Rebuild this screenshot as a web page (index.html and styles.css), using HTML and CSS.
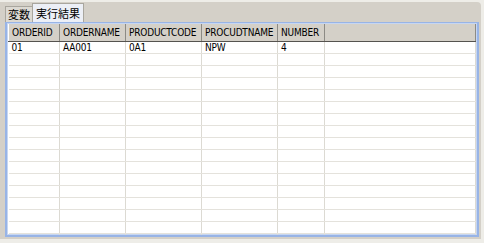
FILE: index.html
```html
<!DOCTYPE html>
<html lang="ja">
<head>
    <meta charset="UTF-8">
    <title>実行結果</title>
    <link rel="stylesheet" href="styles.css">
</head>
<body>
    <!--tab control with the result grid-->
    <div class="tab-control">
        <div class="tab-strip">
            <div class="tab">変数</div>
            <div class="tab tab-active">実行結果</div>
        </div>

        <div class="tab-page">
            <table class="grid">
                <colgroup>
                    <col class="c1"><col class="c2"><col class="c3"><col class="c4"><col class="c5"><col>
                </colgroup>
                <thead>
                    <tr>
                        <th>ORDERID</th>
                        <th>ORDERNAME</th>
                        <th>PRODUCTCODE</th>
                        <th>PROCUDTNAME</th>
                        <th>NUMBER</th>
                        <th></th>
                    </tr>
                </thead>
                <tbody>
                    <tr><td>01</td><td>AA001</td><td>0A1</td><td>NPW</td><td>4</td><td></td></tr>
                    <tr><td></td><td></td><td></td><td></td><td></td><td></td></tr>
                    <tr><td></td><td></td><td></td><td></td><td></td><td></td></tr>
                    <tr><td></td><td></td><td></td><td></td><td></td><td></td></tr>
                    <tr><td></td><td></td><td></td><td></td><td></td><td></td></tr>
                    <tr><td></td><td></td><td></td><td></td><td></td><td></td></tr>
                    <tr><td></td><td></td><td></td><td></td><td></td><td></td></tr>
                    <tr><td></td><td></td><td></td><td></td><td></td><td></td></tr>
                    <tr><td></td><td></td><td></td><td></td><td></td><td></td></tr>
                    <tr><td></td><td></td><td></td><td></td><td></td><td></td></tr>
                    <tr><td></td><td></td><td></td><td></td><td></td><td></td></tr>
                    <tr><td></td><td></td><td></td><td></td><td></td><td></td></tr>
                    <tr><td></td><td></td><td></td><td></td><td></td><td></td></tr>
                    <tr><td></td><td></td><td></td><td></td><td></td><td></td></tr>
                    <tr><td></td><td></td><td></td><td></td><td></td><td></td></tr>
                    <tr><td></td><td></td><td></td><td></td><td></td><td></td></tr>
                    <tr><td></td><td></td><td></td><td></td><td></td><td></td></tr>
                </tbody>
            </table>
        </div>
    </div>
</body>
</html>
```

FILE: styles.css
```css
/*page and tab control*/
body {
    margin: 0;
    background-color: #eeede8;
    font-family: "DejaVu Sans Condensed", "Liberation Sans", sans-serif;
    font-size: 10px;
    color: #000;
}

.tab-control {
    margin: 2px 3px 5px 0;
    padding: 0 2px 2px 5px;
    background-color: #d4d0c8;
    border-top-right-radius: 4px;
}

.tab-strip {
    display: flex;
    height: 20px;
    align-items: flex-end;
}

.tab {
    font-family: "Noto Sans CJK JP", sans-serif;
    font-size: 11px;
    line-height: 15px;
    padding: 0 2px;
    border: 1px solid #a9a69e;
    border-bottom: none;
    background-color: #dcd9d2;
}

.tab-active {
    line-height: 18px;
    background-color: #eceff6;
    margin-left: -1px;
    padding: 0 3px;
}

/*grid area*/
.tab-page {
    height: 210px;
    overflow: hidden;
    background-color: #fff;
    border: 2px solid #98b4e6;
    border-top-width: 1px;
    box-shadow: inset 0 0 0 1px #c6d6f2;
    padding: 1px;
}

.grid {
    width: 100%;
    border-collapse: collapse;
    table-layout: fixed;
    letter-spacing: -0.2px;
}

.c1 { width: 51px; }
.c2 { width: 66px; }
.c3 { width: 76px; }
.c4 { width: 76px; }
.c5 { width: 47px; }

.grid th {
    height: 17px;
    padding: 0 3px;
    text-align: left;
    font-weight: normal;
    background-color: #d4d0c8;
    border-right: 1px solid #8c8a84;
    border-left: 1px solid #fff;
    border-bottom: 1px solid #55534f;
    white-space: nowrap;
    overflow: hidden;
}

.grid td {
    height: 11px;
    padding: 0 3px;
    line-height: 11px;
    border-right: 1px solid #dcdad3;
    border-bottom: 1px solid #e4e2dc;
    white-space: nowrap;
    overflow: hidden;
}
```
